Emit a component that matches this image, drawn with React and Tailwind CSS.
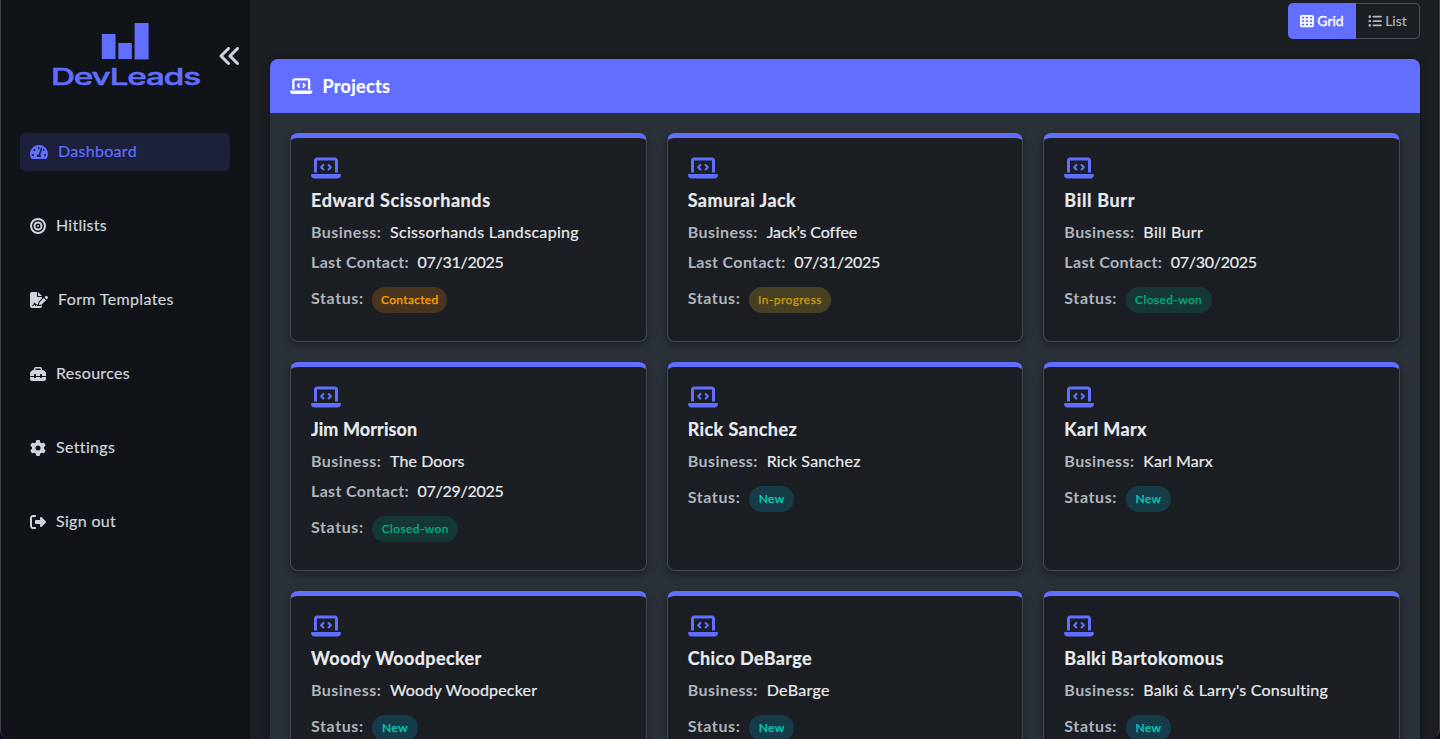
import React from 'react';
import { FaTachometerAlt } from 'react-icons/fa';
import {
  FaAnglesLeft,
  FaBullseye,
  FaFileSignature,
  FaGear,
  FaLaptopCode,
  FaListUl,
  FaRightFromBracket,
  FaTableCells,
  FaToolbox,
} from 'react-icons/fa6';

const NAV = [
  { label: 'Dashboard', icon: FaTachometerAlt, tracking: 'tracking-[0.3px]', wide: true, active: true },
  { label: 'Hitlists', icon: FaBullseye, tracking: 'tracking-[0.25px]' },
  { label: 'Form Templates', icon: FaFileSignature, tracking: 'tracking-[0.36px]', wide: true },
  { label: 'Resources', icon: FaToolbox, tracking: 'tracking-[0.3px]' },
  { label: 'Settings', icon: FaGear, tracking: 'tracking-[0.35px]' },
  { label: 'Sign out', icon: FaRightFromBracket, tracking: 'tracking-[0.33px]' },
];

const STATUS = {
  Contacted: 'w-[75px] bg-[#49351d] text-[#fb9f05] tracking-[0.3px]',
  'In-progress': 'w-[82px] bg-[#474022] text-[#c4980b] tracking-[0.4px]',
  'Closed-won': 'w-[86px] bg-[#163835] text-[#06a981] tracking-[0.38px]',
  New: 'w-[45.5px] bg-[#163c4a] text-[#06cdb9] tracking-[0.4px]',
};

const PROJECTS = [
  { name: 'Edward Scissorhands', business: 'Scissorhands Landscaping', date: '07/31/2025', status: 'Contacted', nameTracking: 'tracking-[0.6px]', tracking: 'tracking-[0.32px]' },
  { name: 'Samurai Jack', business: 'Jack’s Coffee', date: '07/31/2025', status: 'In-progress', nameTracking: 'tracking-[0.45px]', tracking: 'tracking-[-0.08px]' },
  { name: 'Bill Burr', business: 'Bill Burr', date: '07/30/2025', status: 'Closed-won', nameTracking: 'tracking-[0.65px]', tracking: 'tracking-[0.38px]' },
  { name: 'Jim Morrison', business: 'The Doors', date: '07/29/2025', status: 'Closed-won', nameTracking: 'tracking-[0.1px]', tracking: 'tracking-[0.1px]' },
  { name: 'Rick Sanchez', business: 'Rick Sanchez', status: 'New', nameTracking: 'tracking-[0.42px]', tracking: 'tracking-[0.22px]' },
  { name: 'Karl Marx', business: 'Karl Marx', status: 'New', nameTracking: 'tracking-[0.38px]', tracking: 'tracking-[0.1px]' },
  { name: 'Woody Woodpecker', business: 'Woody Woodpecker', status: 'New', nameTracking: 'tracking-[0.36px]', tracking: 'tracking-[0.18px]' },
  { name: 'Chico DeBarge', business: 'DeBarge', status: 'New', nameTracking: 'tracking-[0.4px]', tracking: 'tracking-[0.35px]' },
  { name: 'Balki Bartokomous', business: "Balki & Larry's Consulting", status: 'New', nameTracking: 'tracking-[0.48px]', tracking: 'tracking-[0.23px]' },
];

function Logo() {
  return (
    <svg className="h-[70px] w-[150px]" viewBox="0 0 150 70" fill="#616eff">
      <rect x="50.8" y="14" width="13.7" height="25" />
      <rect x="67.3" y="23" width="13.5" height="16" />
      <rect x="83.6" y="3" width="14" height="36.4" />
      <text x="0" y="65.3" textLength="149" lengthAdjust="spacingAndGlyphs" fontFamily="Inter, sans-serif" fontSize="23.5" fontWeight="500" stroke="#616eff" strokeWidth="0.5" letterSpacing="-0.8">
        DevLeads
      </text>
    </svg>
  );
}

function Sidebar() {
  return (
    <aside className="flex w-[249px] shrink-0 flex-col bg-[#101317] text-[#ced4da]">
      <div className="flex h-[133px] items-start pt-5 pl-[50px]">
        <Logo />
        <button className="mt-6 ml-[16.5px] h-6 w-6">
          <FaAnglesLeft className="size-6" />
        </button>
      </div>
      <nav className="flex flex-col gap-9 pr-5 pl-[19px]">
        {NAV.map(({ label, icon: Icon, tracking, wide, active }) => (
          <a
            key={label}
            className={`flex h-[38px] items-center gap-2.5 rounded-[5px] pl-2.5 text-base ${active ? 'bg-[#1c203a] text-[#616eff]' : ''}`}
          >
            <Icon className={wide ? 'h-4 w-[18px]' : 'size-4'} />
            <span className={`pb-0.5 [-webkit-text-stroke:0.2px] ${tracking}`}>{label}</span>
          </a>
        ))}
      </nav>
    </aside>
  );
}

function Card({ name, business, date, status, nameTracking, tracking }) {
  return (
    <article className="h-[209px] rounded-lg border border-t-[5px] border-[#464b4f] border-t-[#616eff] bg-[#1b1e22] px-5 pt-[18px] text-base text-[#e9ecef] shadow-[0_3px_8px_rgba(0,0,0,0.4)]">
      <FaLaptopCode className="h-6 w-[30px] text-[#616eff]" />
      <h3 className={`mt-2 text-lg leading-6 font-bold [-webkit-text-stroke:0.2px] ${nameTracking}`}>{name}</h3>
      <div className="mt-2 flex h-6 items-center">
        <span className="w-[79px] font-bold tracking-[0.44px] text-[#adb5bd]">Business:</span>
        <span className={`whitespace-nowrap [-webkit-text-stroke:0.2px] ${tracking}`}>{business}</span>
      </div>
      {date && (
        <div className="mt-1.5 flex h-6 items-center">
          <span className="w-[106.5px] font-bold tracking-[0.33px] text-[#adb5bd]">Last Contact:</span>
          <span className="tracking-[-0.28px] [-webkit-text-stroke:0.2px]">{date}</span>
        </div>
      )}
      <div className="mt-3 flex h-[26px] items-start">
        <span className="w-[61.3px] font-bold tracking-[0.6px] text-[#adb5bd]">Status:</span>
        <span className={`mt-px flex h-[26px] items-center justify-center rounded-full text-xs font-medium [-webkit-text-stroke:0.25px] ${STATUS[status]}`}>{status}</span>
      </div>
    </article>
  );
}

export default function App() {
  return (
    <div className="h-[739px] overflow-hidden bg-[#170a26] font-[Lato,sans-serif]">
      <div className="flex h-full overflow-hidden rounded-b-[10px] border-x border-[#414549] bg-[#1b1e22]">
        <Sidebar />
        <main className="flex min-w-0 flex-1 flex-col pt-[3px] pr-[19px] pl-5">
          <div className="flex h-9 shrink-0 self-end text-sm">
            <button className="flex w-[68px] items-center justify-center gap-[3px] rounded-l-[5px] bg-[#616eff] text-white [-webkit-text-stroke:0.4px]">
              <FaTableCells className="size-3.5 [stroke-width:0]" />
              Grid
            </button>
            <button className="flex w-16 items-center justify-center gap-[3px] rounded-r-[5px] border border-l-0 border-[#495057] text-[#adb5bd] [-webkit-text-stroke:0.2px]">
              <FaListUl className="size-3.5" />
              List
            </button>
          </div>
          <section className="mt-5 shrink-0 overflow-hidden rounded-t-lg bg-[#2b3138] shadow-[0_0_8px_rgba(0,0,0,0.25)]">
            <header className="flex h-[54px] items-center gap-2.5 bg-[#616eff] px-5 text-white">
              <FaLaptopCode className="h-[18px] w-[22.5px]" />
              <h2 className="text-lg font-bold tracking-[0.3px] [-webkit-text-stroke:0.2px]">Projects</h2>
            </header>
            <div className="grid grid-cols-3 gap-5 p-5">
              {PROJECTS.map((project) => (
                <Card key={project.name} {...project} />
              ))}
            </div>
          </section>
        </main>
      </div>
    </div>
  );
}
